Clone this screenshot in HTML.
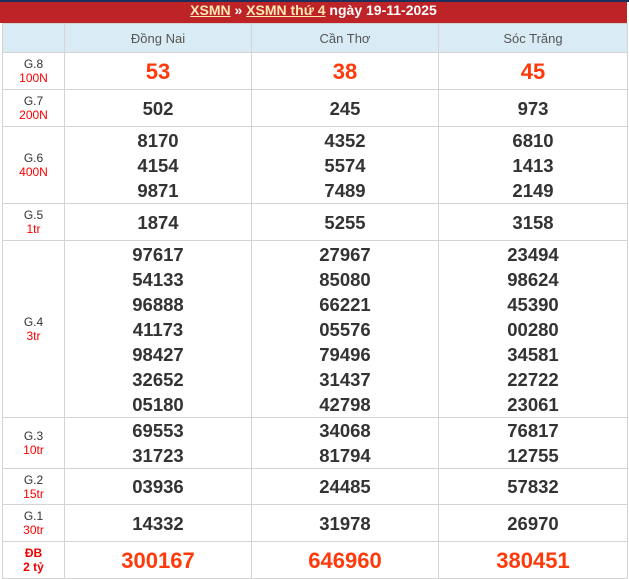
<!DOCTYPE html>
<html><head><meta charset="utf-8"><style>
*{margin:0;padding:0;box-sizing:border-box}
body{width:629px;height:579px;background:#fff;font-family:"Liberation Sans",Arial,sans-serif;position:relative;overflow:hidden}
.top{position:absolute;left:0;top:0;width:629px;height:2px;background:#1c2f5a}
.bar{position:absolute;left:0;top:2px;width:627px;height:21px;background:#be2327;color:#fff;font-weight:bold;font-size:14px;text-align:center;line-height:17px}
.bar u{text-decoration:underline}
.bar .c{color:#ffe9b0}
table{position:absolute;left:2px;top:23px;width:625px;border-collapse:collapse;table-layout:fixed}
td{border:1px solid #d4d4d4;text-align:center;vertical-align:middle;padding:0}
tr.h td{background:#d9ebf5;color:#555;font-size:13px;height:29px}
.l{font-size:12px;color:#333;line-height:14px}
.l span{color:#f00;display:block}
.n{font-size:18.5px;font-weight:bold;color:#333;line-height:25px}
.r{color:#ff3a0a;font-size:22px}
.db{color:#e00;font-weight:bold}
</style></head><body>
<div class="top"></div>
<div class="bar"><u class="c">XSMN</u> » <u class="c">XSMN thứ 4</u> ngày 19-11-2025</div>
<table>
<colgroup><col style="width:62px"><col style="width:187px"><col style="width:187px"><col style="width:189px"></colgroup>
<tr class="h"><td></td><td>Đồng Nai</td><td>Cần Thơ</td><td>Sóc Trăng</td></tr>
<tr style="height:37px"><td class="l">G.8<span>100N</span></td><td class="n r">53</td><td class="n r">38</td><td class="n r">45</td></tr>
<tr style="height:37px"><td class="l">G.7<span>200N</span></td><td class="n">502</td><td class="n">245</td><td class="n">973</td></tr>
<tr style="height:77px"><td class="l">G.6<span>400N</span></td><td class="n">8170<br>4154<br>9871</td><td class="n">4352<br>5574<br>7489</td><td class="n">6810<br>1413<br>2149</td></tr>
<tr style="height:37px"><td class="l">G.5<span>1tr</span></td><td class="n">1874</td><td class="n">5255</td><td class="n">3158</td></tr>
<tr style="height:177px"><td class="l">G.4<span>3tr</span></td><td class="n">97617<br>54133<br>96888<br>41173<br>98427<br>32652<br>05180</td><td class="n">27967<br>85080<br>66221<br>05576<br>79496<br>31437<br>42798</td><td class="n">23494<br>98624<br>45390<br>00280<br>34581<br>22722<br>23061</td></tr>
<tr style="height:51px"><td class="l">G.3<span>10tr</span></td><td class="n">69553<br>31723</td><td class="n">34068<br>81794</td><td class="n">76817<br>12755</td></tr>
<tr style="height:36px"><td class="l">G.2<span>15tr</span></td><td class="n">03936</td><td class="n">24485</td><td class="n">57832</td></tr>
<tr style="height:37px"><td class="l">G.1<span>30tr</span></td><td class="n">14332</td><td class="n">31978</td><td class="n">26970</td></tr>
<tr style="height:37px"><td class="l db" style="color:#e00">ĐB<span style="color:#e00">2 tỷ</span></td><td class="n r">300167</td><td class="n r">646960</td><td class="n r">380451</td></tr>
</table>
</body></html>
